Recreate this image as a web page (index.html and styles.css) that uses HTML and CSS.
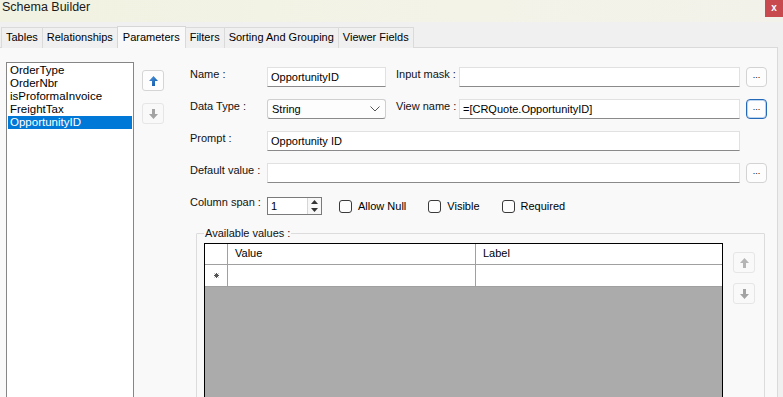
FILE: index.html
```html
<!DOCTYPE html>
<html lang="en">
  <head>
    <meta charset="UTF-8" />
    <meta name="viewport" content="width=device-width, initial-scale=1.0" />
    <title>Schema Builder</title>
    <link rel="stylesheet" href="styles.css">
  </head>
  <body>
    <div class="window">
      <header class="titlebar">
        <span class="title">Schema Builder</span>
        <button class="closeBtn" type="button">x</button>
      </header>

      <nav class="tabs">
        <span class="tab">Tables</span>
        <span class="tab">Relationships</span>
        <span class="tab active">Parameters</span>
        <span class="tab">Filters</span>
        <span class="tab">Sorting And Grouping</span>
        <span class="tab">Viewer Fields</span>
      </nav>

      <section class="panel">
        <ul class="paramList">
          <li>OrderType</li>
          <li>OrderNbr</li>
          <li>isProformaInvoice</li>
          <li>FreightTax</li>
          <li class="selected">OpportunityID</li>
        </ul>

        <div class="moveBtns">
          <button class="iconBtn" type="button">
            <svg width="9" height="10" viewBox="0 0 9 10">
              <defs>
                <linearGradient id="blueArrow" x1="0" y1="0" x2="1" y2="1">
                  <stop offset="0" stop-color="#4f9be6" />
                  <stop offset="1" stop-color="#0c4f9e" />
                </linearGradient>
              </defs>
              <path d="M4.5 0 L9 5 L6 5 L6 10 L3 10 L3 5 L0 5 Z" fill="url(#blueArrow)" />
            </svg>
          </button>
          <button class="iconBtn" type="button" disabled>
            <svg width="9" height="10" viewBox="0 0 9 10">
              <path d="M3 0 L6 0 L6 5 L9 5 L4.5 10 L0 5 L3 5 Z" fill="#a3a3a3" />
            </svg>
          </button>
        </div>

        <div class="editor">
          <form class="fields" action="" method="post">
            <label for="name">Name :</label>
            <input class="textbox" type="text" id="name" value="OpportunityID" />
            <label class="label2" for="mask">Input mask :</label>
            <input class="textbox" type="text" id="mask" />
            <button class="dotsBtn" type="button">...</button>

            <label for="dataType">Data Type :</label>
            <div class="combo" id="dataType">
              <span>String</span>
              <svg width="10" height="6" viewBox="0 0 10 6">
                <polyline points="0.5,0.5 5,5 9.5,0.5" fill="none" stroke="#555" stroke-width="1" />
              </svg>
            </div>
            <label class="label2" for="viewName">View name :</label>
            <input class="textbox" type="text" id="viewName" value="=[CRQuote.OpportunityID]" />
            <button class="dotsBtn focused" type="button">...</button>

            <label for="prompt">Prompt :</label>
            <input class="textbox wide" type="text" id="prompt" value="Opportunity ID" />

            <label for="defValue">Default value :</label>
            <input class="textbox wide" type="text" id="defValue" />
            <button class="dotsBtn" type="button">...</button>

            <label for="colSpan">Column span :</label>
            <div class="flags">
              <div class="spinner">
                <input type="text" id="colSpan" value="1" />
                <div class="spinArrows">
                  <svg width="7" height="4" viewBox="0 0 7 4"><path d="M3.5 0 L7 4 L0 4 Z" fill="#333" /></svg>
                  <svg width="7" height="4" viewBox="0 0 7 4"><path d="M0 0 L7 0 L3.5 4 Z" fill="#333" /></svg>
                </div>
              </div>
              <label class="check"><span class="box"></span>Allow Null</label>
              <label class="check"><span class="box"></span>Visible</label>
              <label class="check"><span class="box"></span>Required</label>
            </div>
          </form>

          <fieldset class="available">
            <legend>Available values :</legend>
            <div class="valuesGrid">
              <div class="gridRow header">
                <span class="rowHead"></span>
                <span class="cell value">Value</span>
                <span class="cell">Label</span>
              </div>
              <div class="gridRow">
                <span class="rowHead">
                  <svg width="5" height="5" viewBox="0 0 5 5">
                    <path d="M2.5 0 V5 M0 2.5 H5 M0.7 0.7 L4.3 4.3 M4.3 0.7 L0.7 4.3" stroke="#555" stroke-width="1" />
                  </svg>
                </span>
                <span class="cell value"></span>
                <span class="cell"></span>
              </div>
              <div class="gridEmpty"></div>
            </div>
            <div class="moveBtns small">
              <button class="iconBtn" type="button" disabled>
                <svg width="9" height="10" viewBox="0 0 9 10">
                  <path d="M4.5 0 L9 5 L6 5 L6 10 L3 10 L3 5 L0 5 Z" fill="#b5b5b5" />
                </svg>
              </button>
              <button class="iconBtn" type="button" disabled>
                <svg width="9" height="10" viewBox="0 0 9 10">
                  <path d="M3 0 L6 0 L6 5 L9 5 L4.5 10 L0 5 L3 5 Z" fill="#a3a3a3" />
                </svg>
              </button>
            </div>
          </fieldset>
        </div>
      </section>
    </div>
  </body>
</html>
```

FILE: styles.css
```css
* {
  box-sizing: border-box;
}
html,
body {
  margin: 0;
  height: 397px;
  overflow: hidden;
}
body {
  font-family: "Liberation Sans", Arial, sans-serif;
  font-size: 11px;
  color: #000;
  background: #f0f0f0;
}
button,
input {
  font: inherit;
  color: inherit;
}
.window {
  display: flex;
  flex-direction: column;
  height: 100%;
}

/* title bar */
.titlebar {
  flex-shrink: 0;
  height: 22px;
  display: flex;
  justify-content: space-between;
  align-items: flex-start;
  background: linear-gradient(90deg, #f1f2e1, #f3f3e8 60%, #f2f2ea);
}
.title {
  font-size: 12.5px;
  padding: 0 0 0 2px;
  color: #1a1a1a;
}
.closeBtn {
  width: 18px;
  height: 17px;
  border: none;
  padding: 0 0 2px;
  background: #c8494e;
  color: #fff;
  font-size: 10px;
  font-weight: bold;
}

/* tabs */
.tabs {
  flex-shrink: 0;
  display: flex;
  align-items: flex-end;
  height: 26px;
  padding-left: 1px;
  margin-bottom: -1px;
  position: relative;
  z-index: 1;
}
.tab {
  height: 21px;
  line-height: 19px;
  padding: 0 4px;
  background: #f0f0f0;
  border: 1px solid #dadada;
  border-bottom: none;
  margin-right: -1px;
}
.tab.active {
  height: 22px;
  line-height: 20px;
  background: #f9f9f9;
  border-color: #d6d6d6;
  padding: 0 5px;
}

/* tab page */
.panel {
  flex: 1;
  min-height: 0;
  overflow: hidden;
  display: flex;
  align-items: flex-start;
  width: 778px;
  padding: 14px 0 0 6px;
  background: #f9f9f9;
  border: 1px solid #dadada;
  border-left: none;
  border-bottom: none;
}
.paramList {
  flex-shrink: 0;
  list-style: none;
  margin: 0;
  padding: 1px;
  width: 128px;
  height: 400px;
  background: #fff;
  border: 1px solid #868686;
  font-size: 11.5px;
}
.paramList li {
  line-height: 13px;
  padding-left: 2px;
}
.paramList li.selected {
  background: #0078d7;
  color: #fff;
}
.moveBtns {
  display: flex;
  flex-direction: column;
  gap: 12px;
  margin: 8px 0 0 8px;
}
.iconBtn {
  width: 22px;
  height: 21px;
  padding: 0;
  display: flex;
  align-items: center;
  justify-content: center;
  background: #fdfdfd;
  border: 1px solid #d5d5d5;
  border-radius: 3px;
}
.iconBtn:disabled {
  border-color: #e6e6e6;
  background: #f9f9f9;
}

/* parameter editor */
.editor {
  margin: 5px 0 0 26px;
}
.fields {
  display: grid;
  grid-template-columns: 77px 119px 73px 281px 27px;
  grid-auto-rows: 20px;
  row-gap: 12px;
}
.fields > label {
  grid-column: 1;
  line-height: 14px;
  color: #111;
}
.fields > label.label2 {
  grid-column: 3;
  padding-left: 10px;
}
.textbox {
  height: 20px;
  padding: 0 3px;
  background: #fff;
  border: 1px solid #e1e1e1;
  border-bottom-color: #8a8a8a;
  outline: none;
}
.textbox.wide {
  grid-column: 2 / 5;
}
.dotsBtn {
  grid-column: 5;
  justify-self: end;
  width: 21px;
  height: 20px;
  padding: 0 0 6px;
  font-size: 9px;
  line-height: 1;
  display: flex;
  align-items: flex-end;
  justify-content: center;
  background: #fdfdfd;
  border: 1px solid #d3d3d3;
  border-radius: 4px;
}
.dotsBtn.focused {
  border-color: #2468b8;
  box-shadow: inset 0 0 0 1px #bcd5ee;
}
.combo {
  display: flex;
  align-items: center;
  justify-content: space-between;
  height: 20px;
  padding: 0 5px 0 4px;
  background: #fdfdfd;
  border: 1px solid #cfcfcf;
  border-bottom-color: #8a8a8a;
  border-radius: 3px;
}
.flags {
  grid-column: 2 / 6;
  display: flex;
  align-items: center;
}
.spinner {
  display: flex;
  width: 55px;
  height: 18px;
  margin-top: 2px;
  background: #fff;
  border: 1px solid #7a7a7a;
}
.spinner input {
  width: 39px;
  border: none;
  padding: 0 3px;
  outline: none;
}
.spinArrows {
  flex: 1;
  display: flex;
  flex-direction: column;
  align-items: center;
  justify-content: space-around;
  border-left: 1px solid #d6d6d6;
  background: #f7f7f7;
}
.check {
  display: flex;
  align-items: center;
  gap: 6px;
  margin-top: 2px;
}
.spinner + .check {
  margin-left: 17px;
}
.check + .check {
  margin-left: 22px;
}
.box {
  width: 13px;
  height: 13px;
  background: #fdfdfd;
  border: 1px solid #3a3a3a;
  border-radius: 3px;
}

/* available values group */
.available {
  display: flex;
  align-items: flex-start;
  width: 567px;
  height: 200px;
  margin: 11px 0 0 6px;
  padding: 3px 9px 0 7px;
  border: 1px solid #dcdcdc;
  border-radius: 1px;
}
.available legend {
  padding: 0 1px;
  margin-left: 0;
  line-height: 14px;
  color: #111;
}
.valuesGrid {
  display: flex;
  flex-direction: column;
  width: 519px;
  height: 170px;
  border: 1px solid #000;
}
.gridRow {
  display: flex;
  background: #fff;
  border-bottom: 1px solid #a0a0a0;
}
.gridRow.header {
  height: 21px;
}
.gridRow:not(.header) {
  height: 22px;
}
.rowHead {
  width: 23px;
  display: flex;
  align-items: center;
  justify-content: center;
  border-right: 1px solid #a0a0a0;
}
.cell {
  flex: 1;
  padding: 3px 0 0 7px;
}
.cell.value {
  flex: none;
  width: 248px;
  border-right: 1px solid #a0a0a0;
}
.gridEmpty {
  flex: 1;
  background: #ababab;
}
.moveBtns.small {
  margin: 9px 0 0 10px;
  gap: 10px;
}
```
